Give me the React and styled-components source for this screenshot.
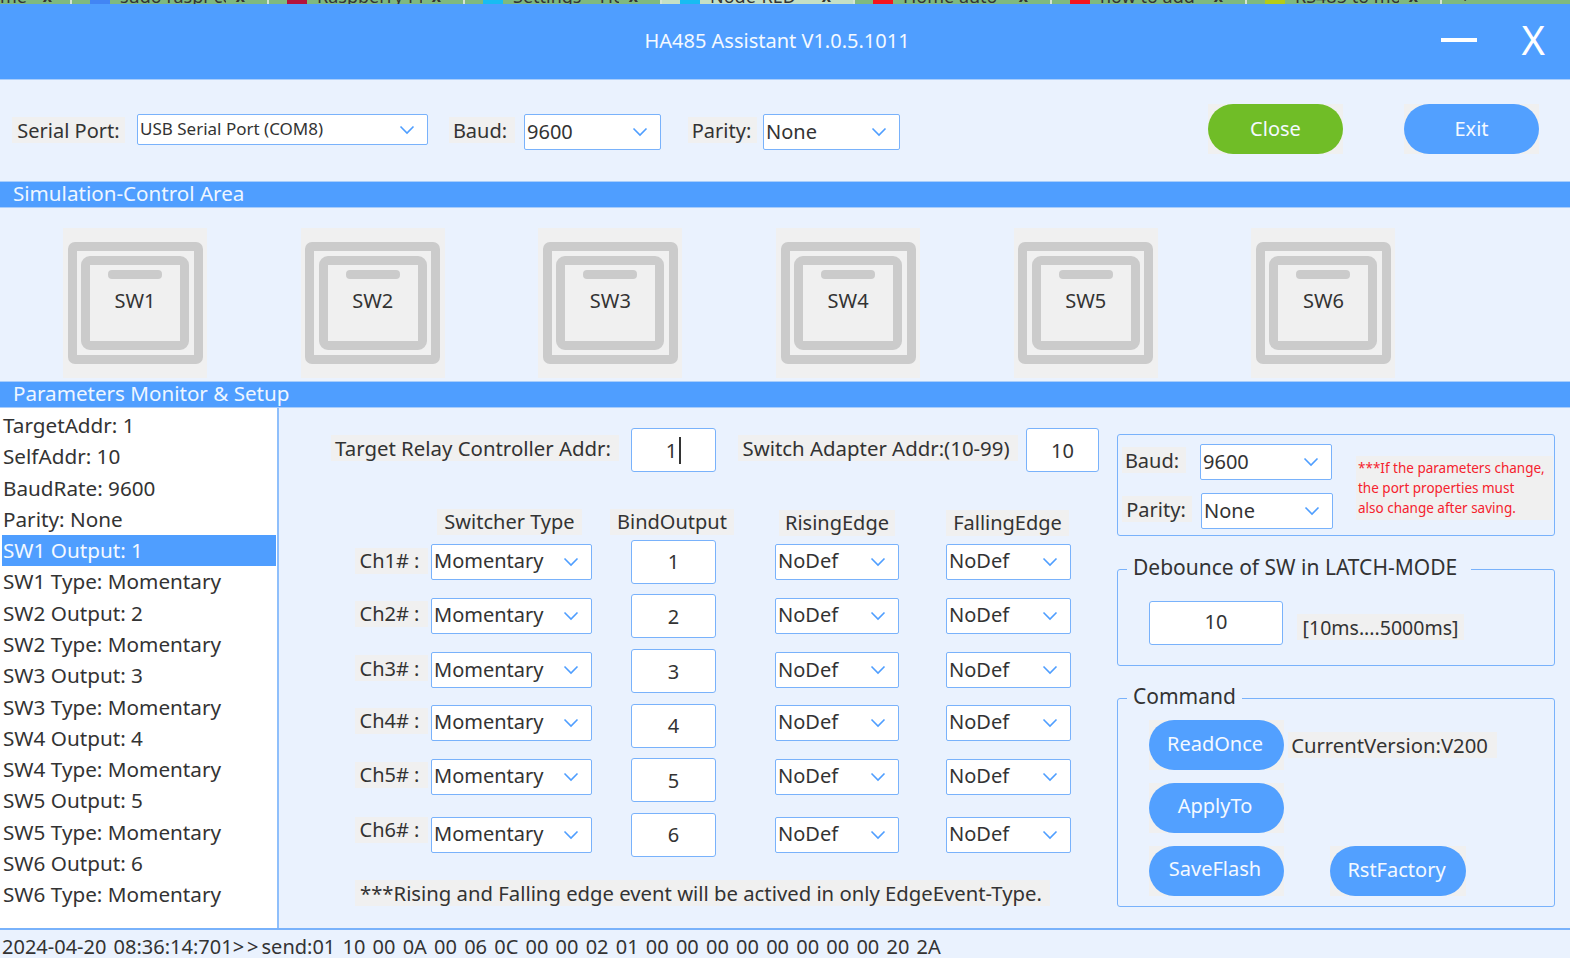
import React from "react";
import styled, { createGlobalStyle } from "styled-components";

const GlobalStyle = createGlobalStyle`
    html, body {
        margin: 0;
        padding: 0;
        background: #eaf2fe;
    }
    * {
        box-sizing: border-box;
    }
    body {
        font-family: "Noto Sans", "Liberation Sans", sans-serif;
        color: #333333;
    }
`;

const Page = styled.div`
    width: 1570px;
    height: 958px;
    overflow: hidden;
    display: flex;
    flex-direction: column;
    background: #eaf2fe;
    & > * {
        flex: none;
    }
`;

const TabStrip = styled.div`
    height: 4px;
    display: flex;
    overflow: hidden;
    background: #7fb97f;
`;

const Tab = styled.div`
    width: ${props => props.$width}px;
    height: 4px;
    flex: none;
    display: flex;
    align-items: flex-start;
    gap: 10px;
    padding: 0 ${props => props.$right || 0}px 0 ${props => props.$left || 0}px;
    border-left: ${props => (props.$left ? "2px solid #d5e5d5" : "none")};
    background: ${props => (props.$active ? "#c4e0c6" : "transparent")};
    color: #333333;
`;

const TabIcon = styled.span`
    width: 20px;
    height: 4px;
    flex: none;
    background: ${props => props.$color};
`;

const TabText = styled.span`
    flex: 1;
    overflow: hidden;
    margin-top: -14px;
    font-size: 18px;
    line-height: 20px;
    white-space: nowrap;
`;

const TabClose = styled.span`
    flex: none;
    margin-top: -14px;
    font-size: 16px;
    font-weight: 700;
    line-height: 20px;
`;

const TitleBar = styled.div`
    height: 76px;
    background: #4f9eff;
    display: flex;
    align-items: center;
    justify-content: center;
    position: relative;
    padding: 0 16px 3px 0;
    color: #f4f9ff;
    font-size: 20px;
    border-bottom: 1px solid #a9cdfb;
`;

const TitleControls = styled.div`
    position: absolute;
    right: 25px;
    top: 0;
    height: 72px;
    display: flex;
    align-items: center;
    gap: 45px;
`;

const MinimizeBar = styled.span`
    width: 36px;
    height: 4px;
    background: #ffffff;
`;

const CloseX = styled.span`
    font-size: 40px;
    font-weight: 400;
    line-height: 1;
    color: #ffffff;
`;

const Toolbar = styled.div`
    height: 101px;
    display: flex;
    padding: 34px 0 0 12px;
    position: relative;
`;

const Label = styled.span`
    display: inline-flex;
    align-items: center;
    flex: none;
    height: 26px;
    width: ${props => props.$width}px;
    justify-content: center;
    padding-right: ${props => props.$pad || 0}px;
    margin-top: ${props => props.$nudge || 0}px;
    background: #f0f0f0;
    font-size: ${props => props.$size || 20}px;
    white-space: nowrap;
`;

const ToolbarItem = styled.div`
    display: flex;
    align-items: flex-start;
    flex: none;
    margin-left: ${props => props.$left || 0}px;
    padding-top: ${props => props.$top || 0}px;
`;

const SelectBox = styled.div`
    width: ${props => props.$width}px;
    height: ${props => props.$height || 36}px;
    flex: none;
    display: flex;
    align-items: center;
    justify-content: space-between;
    background: #ffffff;
    border: 1.5px solid #79b2fb;
    border-radius: 2px;
    padding: 0 12px 2px 2px;
    font-size: ${props => props.$size || 20}px;
    margin-top: ${props => props.$nudge || 0}px;
    white-space: nowrap;
`;

const ToolbarButtons = styled.div`
    position: absolute;
    top: 24px;
    left: 1208px;
    display: flex;
    gap: 61px;
`;

const PillBack = styled.div`
    width: ${props => props.$width || 135}px;
    height: 50px;
    flex: none;
    background: #f0f0f0;
`;

const Pill = styled.button`
    width: 100%;
    height: 100%;
    border: 0;
    padding: 0 ${props => props.$pad || 0}px ${props => (props.$pad ? 4 : 2)}px 0;
    border-radius: 25px;
    background: ${props => props.$color || "#52a0ff"};
    color: #f4f9ff;
    font-family: inherit;
    font-size: 20px;
`;

const SectionHeader = styled.div`
    height: 27px;
    background: #4f9eff;
    border-top: 1px solid #a9cdfb;
    border-bottom: 1px solid #a9cdfb;
    color: #eef6ff;
    font-size: 20.6px;
    line-height: 23px;
    padding-left: 13px;
`;

const SwitchArea = styled.div`
    height: 173px;
    display: flex;
    gap: 93.7px;
    padding: 20px 0 0 63px;
`;

const SwitchTile = styled.div`
    width: 144px;
    height: 150px;
    flex: none;
    background: #f0f0f0;
    display: flex;
    align-items: center;
    justify-content: center;
`;

const SwitchOuter = styled.div`
    width: 135px;
    height: 122px;
    border: 9px solid #cbcbcb;
    border-radius: 7px;
    display: flex;
    align-items: center;
    justify-content: center;
`;

const SwitchInner = styled.div`
    width: 108px;
    height: 94px;
    border: 9px solid #cbcbcb;
    border-radius: 9px;
    padding-top: 5px;
    display: flex;
    flex-direction: column;
    align-items: center;
`;

const SwitchBar = styled.span`
    width: 54px;
    height: 9px;
    border-radius: 4px;
    background: #cbcbcb;
`;

const SwitchName = styled.span`
    margin-top: 8px;
    font-size: 20px;
    line-height: 28px;
`;

const Body = styled.div`
    height: 520px;
    display: flex;
`;

const ParamList = styled.div`
    width: 279px;
    flex: none;
    background: #ffffff;
    border-right: 2px solid #8fbffb;
    padding: 2px 0 0 2px;
`;

const ParamItem = styled.div`
    width: 274px;
    height: 31.27px;
    display: flex;
    align-items: center;
    padding: 0 0 1px 1px;
    font-size: 20.7px;
    white-space: nowrap;
    background: ${props => (props.$selected ? "#4f9eff" : "transparent")};
    color: ${props => (props.$selected ? "#f4f9ff" : "#333333")};
`;

const FormColumn = styled.div`
    width: 838px;
    flex: none;
    padding: 20px 0 0 52px;
`;

const AddrRow = styled.div`
    display: flex;
    align-items: center;
`;

const AddrLabel = styled(Label)`
    margin-right: ${props => props.$gap}px;
`;

const AddrBox = styled.div`
    margin-right: ${props => props.$gap || 0}px;
`;

const NumberBox = styled.div`
    width: ${props => props.$width || 85}px;
    height: 44px;
    flex: none;
    display: flex;
    align-items: center;
    justify-content: center;
    padding-bottom: ${props => props.$lift || 0}px;
    background: #ffffff;
    border: 1.5px solid #79b2fb;
    border-radius: 3px;
    font-size: 20px;
`;

const Caret = styled.span`
    width: 2px;
    height: 27px;
    margin-left: 2px;
    background: #333333;
`;

const ChannelGrid = styled.div`
    display: grid;
    grid-template-columns: 76px 161px 39px 85px 59px 124px 47px 125px;
    grid-auto-rows: 54.6px;
    align-items: center;
    justify-items: start;
    margin-top: 8px;
    margin-left: 24px;
`;

const HeaderCell = styled.div`
    align-self: end;
    grid-column: ${props => props.$column};
    margin-left: ${props => props.$left}px;
    margin-bottom: ${props => -(props.$drop || 0)}px;
`;

const Footnote = styled.div`
    display: inline-block;
    margin: 18px 0 0 24px;
    padding: 0 8px 0 5px;
    background: #f0f0f0;
    font-size: 20.3px;
    line-height: 26px;
    white-space: nowrap;
`;

const SideColumn = styled.div`
    flex: 1;
    padding-top: 26px;
    display: flex;
    flex-direction: column;
`;

const ParityBox = styled.div`
    width: 438px;
    height: 102px;
    border: 1.5px solid #79b2fb;
    border-radius: 3px;
    display: flex;
    padding-left: 4px;
`;

const ParityFields = styled.div`
    width: 234px;
    flex: none;
    display: flex;
    flex-direction: column;
    gap: 13px;
    padding-top: 9px;
`;

const ParityRow = styled.div`
    display: flex;
    align-items: center;
    gap: ${props => props.$gap}px;
`;

const WarningText = styled.div`
    width: 197px;
    height: 64px;
    margin-top: 21px;
    padding: 2px 0 0 2px;
    background: #f0f0f0;
    color: #f5222d;
    font-size: 13.5px;
    line-height: 20px;
    white-space: nowrap;
`;

const FieldBox = styled.fieldset`
    width: 438px;
    height: ${props => props.$height}px;
    margin: ${props => props.$top}px 0 0 0;
    padding: 0 0 0 31px;
    border: 1.5px solid #79b2fb;
    border-radius: 3px;
    min-inline-size: 0;
`;

const FieldLegend = styled.legend`
    margin-left: -22px;
    padding: 0 ${props => props.$right}px 0 6px;
    font-size: 21px;
    line-height: 22px;
    height: 26px;
    white-space: nowrap;
`;

const DebounceRow = styled.div`
    display: flex;
    align-items: flex-start;
    gap: 14px;
    margin-top: 19px;
`;

const RangeLabel = styled(Label)`
    margin-top: 13px;
`;

const CommandRows = styled.div`
    display: flex;
    flex-direction: column;
    gap: 12.5px;
    margin-top: 9px;
`;

const CommandRow = styled.div`
    display: flex;
    align-items: center;
    gap: ${props => props.$gap || 0}px;
`;

const ResetButton = styled.div`
    margin-top: 1px;
`;

const LogBar = styled.div`
    height: 30px;
    border-top: 2px solid #79b2fb;
    padding-left: 2px;
    font-size: 20px;
    line-height: 33px;
    word-spacing: 2px;
    white-space: nowrap;
    overflow: hidden;
`;

const LogArrows = styled.span`
    letter-spacing: 3px;
`;

const ChevronIcon = styled.svg`
    width: 16px;
    height: 10px;
    flex: none;
    margin-top: 2px;
`;

const Chevron = () => (
    <ChevronIcon viewBox="0 0 16 10">
        <polyline
            points="1.5,1.5 8,8 14.5,1.5"
            fill="none"
            stroke="#4f9eff"
            strokeWidth="1.6"
        />
    </ChevronIcon>
);

const Select = ({ value, width, height, size, nudge }) => (
    <SelectBox $width={width} $height={height} $size={size} $nudge={nudge}>
        {value}
        <Chevron />
    </SelectBox>
);

const tabs = [
    { width: 70, text: "me", right: 18, close: true },
    { width: 197, left: 18, right: 22, icon: "#4285f4", text: "sudo raspi-co", close: true },
    { width: 196, left: 18, right: 22, icon: "#b3123c", text: "Raspberry Pi", close: true },
    { width: 197, left: 18, right: 22, icon: "#18bcf2", text: "Settings – Ho", close: true },
    { width: 193, left: 18, right: 22, icon: "#18bcf2", text: "Node-RED", active: true, close: true },
    { width: 197, left: 18, right: 22, icon: "#f5141e", text: "Home auto", close: true },
    { width: 195, left: 18, right: 22, icon: "#f5141e", text: "how to add", close: true },
    { width: 195, left: 18, right: 22, icon: "#b5cc18", text: "RS485 to mo", close: true },
    { width: 130, left: 18, text: "+" },
];

const params = [
    "TargetAddr: 1",
    "SelfAddr: 10",
    "BaudRate: 9600",
    "Parity: None",
    "SW1 Output: 1",
    "SW1 Type: Momentary",
    "SW2 Output: 2",
    "SW2 Type: Momentary",
    "SW3 Output: 3",
    "SW3 Type: Momentary",
    "SW4 Output: 4",
    "SW4 Type: Momentary",
    "SW5 Output: 5",
    "SW5 Type: Momentary",
    "SW6 Output: 6",
    "SW6 Type: Momentary",
];

const channels = [
    { name: "Ch1# :", nudge: 0, labelNudge: -2 },
    { name: "Ch2# :", nudge: -1, labelNudge: -5 },
    { name: "Ch3# :", nudge: -2, labelNudge: -6 },
    { name: "Ch4# :", nudge: -6, labelNudge: -10 },
    { name: "Ch5# :", nudge: -7, labelNudge: -11 },
    { name: "Ch6# :", nudge: 0, labelNudge: -10 },
];

const App = () => {
    return (
        <Page>
            <GlobalStyle />
            <TabStrip>
                {tabs.map(tab => (
                    <Tab
                        key={tab.text}
                        $width={tab.width}
                        $active={tab.active}
                        $left={tab.left}
                        $right={tab.right}
                    >
                        {tab.icon && <TabIcon $color={tab.icon} />}
                        <TabText>{tab.text}</TabText>
                        {tab.close && <TabClose>x</TabClose>}
                    </Tab>
                ))}
            </TabStrip>
            <TitleBar>
                HA485 Assistant V1.0.5.1011
                <TitleControls>
                    <MinimizeBar />
                    <CloseX>X</CloseX>
                </TitleControls>
            </TitleBar>
            <Toolbar>
                <ToolbarItem $top={3}>
                    <Label $width={113}>Serial Port:</Label>
                </ToolbarItem>
                <ToolbarItem $left={12}>
                    <Select
                        value="USB Serial Port (COM8)"
                        width={291}
                        height={31}
                        size={17}
                    />
                </ToolbarItem>
                <ToolbarItem $left={21} $top={3}>
                    <Label $width={66} $pad={4}>
                        Baud:
                    </Label>
                </ToolbarItem>
                <ToolbarItem $left={9}>
                    <Select value="9600" width={137} />
                </ToolbarItem>
                <ToolbarItem $left={27} $top={3}>
                    <Label $width={69} $pad={2}>
                        Parity:
                    </Label>
                </ToolbarItem>
                <ToolbarItem $left={6}>
                    <Select value="None" width={137} />
                </ToolbarItem>
                <ToolbarButtons>
                    <PillBack>
                        <Pill $color="#70bd27">Close</Pill>
                    </PillBack>
                    <PillBack>
                        <Pill>Exit</Pill>
                    </PillBack>
                </ToolbarButtons>
            </Toolbar>
            <SectionHeader>Simulation-Control Area</SectionHeader>
            <SwitchArea>
                {["SW1", "SW2", "SW3", "SW4", "SW5", "SW6"].map(name => (
                    <SwitchTile key={name}>
                        <SwitchOuter>
                            <SwitchInner>
                                <SwitchBar />
                                <SwitchName>{name}</SwitchName>
                            </SwitchInner>
                        </SwitchOuter>
                    </SwitchTile>
                ))}
            </SwitchArea>
            <SectionHeader>Parameters Monitor &amp; Setup</SectionHeader>
            <Body>
                <ParamList>
                    {params.map(param => (
                        <ParamItem
                            key={param}
                            $selected={param === "SW1 Output: 1"}
                        >
                            {param}
                        </ParamItem>
                    ))}
                </ParamList>
                <FormColumn>
                    <AddrRow>
                        <AddrLabel
                            $width={288}
                            $size={20.4}
                            $pad={4}
                            $gap={12}
                            $nudge={-4}
                        >
                            Target Relay Controller Addr:
                        </AddrLabel>
                        <AddrBox $gap={22}>
                            <NumberBox>
                                1
                                <Caret />
                            </NumberBox>
                        </AddrBox>
                        <AddrLabel
                            $width={280}
                            $size={20.4}
                            $pad={4}
                            $gap={8}
                            $nudge={-4}
                        >
                            Switch Adapter Addr:(10-99)
                        </AddrLabel>
                        <NumberBox $width={73}>10</NumberBox>
                    </AddrRow>
                    <ChannelGrid>
                        <HeaderCell $column="2" $left={6}>
                            <Label $width={145}>Switcher Type</Label>
                        </HeaderCell>
                        <HeaderCell $column="3 / span 2" $left={18}>
                            <Label $width={124}>BindOutput</Label>
                        </HeaderCell>
                        <HeaderCell $column="5 / span 2" $left={63} $drop={1}>
                            <Label $width={116}>RisingEdge</Label>
                        </HeaderCell>
                        <HeaderCell $column="7 / span 2" $left={47} $drop={1}>
                            <Label $width={123}>FallingEdge</Label>
                        </HeaderCell>
                        {channels.map((channel, index) => (
                            <React.Fragment key={channel.name}>
                                <Label
                                    $width={73}
                                    $pad={4}
                                    $nudge={channel.labelNudge}
                                >
                                    {channel.name}
                                </Label>
                                <Select
                                    value="Momentary"
                                    width={161}
                                    nudge={channel.nudge}
                                />
                                <span />
                                <NumberBox>{index + 1}</NumberBox>
                                <span />
                                <Select
                                    value="NoDef"
                                    width={124}
                                    nudge={channel.nudge}
                                />
                                <span />
                                <Select
                                    value="NoDef"
                                    width={125}
                                    nudge={channel.nudge}
                                />
                            </React.Fragment>
                        ))}
                    </ChannelGrid>
                    <Footnote>
                        ***Rising and Falling edge event will be actived in only
                        EdgeEvent-Type.
                    </Footnote>
                </FormColumn>
                <SideColumn>
                    <ParityBox>
                        <ParityFields>
                            <ParityRow $gap={14}>
                                <Label $width={64} $pad={4} $nudge={-4}>
                                    Baud:
                                </Label>
                                <Select value="9600" width={132} />
                            </ParityRow>
                            <ParityRow $gap={9}>
                                <Label $width={70} $pad={2} $nudge={-4}>
                                    Parity:
                                </Label>
                                <Select value="None" width={132} />
                            </ParityRow>
                        </ParityFields>
                        <WarningText>
                            ***If the parameters change,
                            <br />
                            the port properties must
                            <br />
                            also change after saving.
                        </WarningText>
                    </ParityBox>
                    <FieldBox $height={110} $top={20}>
                        <FieldLegend $right={14}>
                            Debounce of SW in LATCH-MODE
                        </FieldLegend>
                        <DebounceRow>
                            <NumberBox $width={134} $lift={4}>
                                10
                            </NumberBox>
                            <RangeLabel $width={167} $size={19.5}>
                                [10ms....5000ms]
                            </RangeLabel>
                        </DebounceRow>
                    </FieldBox>
                    <FieldBox $height={222} $top={19}>
                        <FieldLegend $right={6}>Command</FieldLegend>
                        <CommandRows>
                            <CommandRow $gap={4}>
                                <PillBack>
                                    <Pill $pad={3}>ReadOnce</Pill>
                                </PillBack>
                                <Label $width={209} $size={20.3} $pad={6}>
                                    CurrentVersion:V200
                                </Label>
                            </CommandRow>
                            <CommandRow>
                                <PillBack>
                                    <Pill $pad={3}>ApplyTo</Pill>
                                </PillBack>
                            </CommandRow>
                            <CommandRow $gap={46}>
                                <PillBack>
                                    <Pill $pad={3}>SaveFlash</Pill>
                                </PillBack>
                                <ResetButton>
                                    <PillBack $width={136}>
                                        <Pill $pad={3}>RstFactory</Pill>
                                    </PillBack>
                                </ResetButton>
                            </CommandRow>
                        </CommandRows>
                    </FieldBox>
                </SideColumn>
            </Body>
            <LogBar>
                2024-04-20 08:36:14:701<LogArrows>&gt;&gt;</LogArrows>send:01 10 00
                0A 00 06 0C 00 00 02 01 00 00 00 00 00 00 00 00 20 2A
            </LogBar>
        </Page>
    );
};

export default App;
